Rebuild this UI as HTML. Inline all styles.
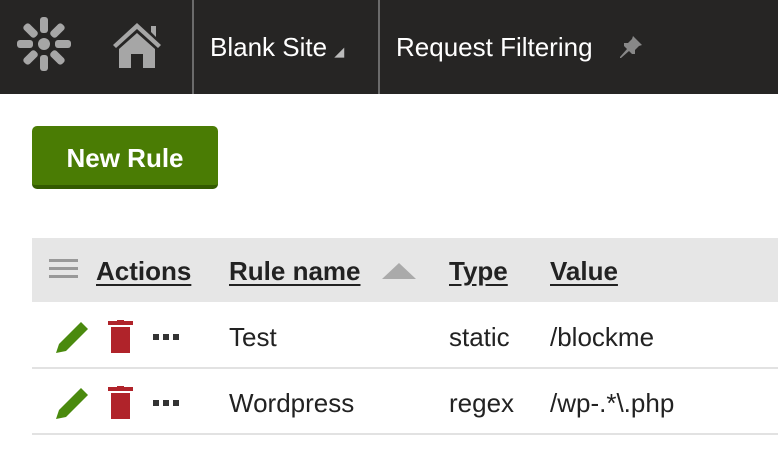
<!DOCTYPE html>
<html><head><style>
body{margin:0;width:778px;height:475px;background:#fff;font-family:"Liberation Sans",sans-serif;overflow:hidden;position:relative}
.hdr{position:absolute;left:0;top:0;width:778px;height:94px;background:#262524}
.sep{position:absolute;top:0;width:2px;height:94px;background:#6b6b6b}
.ht{position:absolute;top:32px;color:#fff;font-size:26px}
.btn{position:absolute;left:32px;top:126px;width:186px;height:59px;background:#4a7c04;border-bottom:4px solid #335a00;border-radius:5px;color:#fff;font-weight:bold;font-size:26px;text-align:center;line-height:64px}
.th{position:absolute;left:32px;top:238px;width:746px;height:64px;background:#e6e6e6}
.c{position:absolute;font-size:26px;color:#222}
.h{font-weight:bold;text-decoration:underline;text-underline-offset:4px;top:256px}
.line{position:absolute;left:32px;width:746px;height:2px;background:#e2e2e2}
</style></head><body>
<div class="hdr">
<svg style="position:absolute;left:15px;top:15px" width="58" height="58" viewBox="-29 -29 58 58">
<g fill="#a6a6a6">
<circle r="6"/>
<g id="p"><rect x="-4" y="-27" width="8" height="16" rx="3"/></g>
<use href="#p" transform="rotate(45)"/><use href="#p" transform="rotate(90)"/><use href="#p" transform="rotate(135)"/><use href="#p" transform="rotate(180)"/><use href="#p" transform="rotate(225)"/><use href="#p" transform="rotate(270)"/><use href="#p" transform="rotate(315)"/>
</g></svg>
<svg style="position:absolute;left:111px;top:21px" width="52" height="48" viewBox="0 0 52 48">
<path fill="#a6a6a6" d="M2 24 L26 2 L50 24 L47 27 L26 8 L5 27Z M40 5 H45 V16 L40 11Z M8 28 L26 12 L44 28 V47 H32 V33 H20 V47 H8Z"/></svg>
<div class="sep" style="left:192px"></div>
<div class="sep" style="left:378px"></div>
<div class="ht" style="left:210px">Blank Site <span style="font-size:13px;color:#bbb">&#9698;</span></div>
<div class="ht" style="left:396px">Request Filtering</div>
<svg style="position:absolute;left:618px;top:34px" width="26" height="26" viewBox="0 0 26 26"><path fill="#888" d="M15 2 L24 11 L21 12 L17 16 L17 20 L14 20 L6 12 L6 9 L10 9 L14 5Z M9 15 L11 17 L3 24 L2 24 L2 23Z"/></svg>
</div>
<div class="btn">New Rule</div>
<div class="th"></div>
<svg style="position:absolute;left:49px;top:258px" width="30" height="22"><g fill="#999"><rect y="1" width="29" height="3"/><rect y="9" width="29" height="3"/><rect y="17" width="29" height="3"/></g></svg>
<div class="c h" style="left:96px">Actions</div>
<div class="c h" style="left:229px">Rule name</div>
<svg style="position:absolute;left:382px;top:262px" width="34" height="18"><path fill="#aaa" d="M0 17 L17 1 L34 17Z"/></svg>
<div class="c h" style="left:449px">Type</div>
<div class="c h" style="left:550px">Value</div>
<div class="line" style="top:367px"></div>
<div class="line" style="top:433px"></div>
<svg style="position:absolute;left:55px;top:320px" width="130" height="34"><path fill="#4a8a0e" d="M1 33 L4 24 L26 2 L33 9 L11 31Z"/><rect x="53" y="1" width="25" height="4" fill="#b0232a"/><rect x="62" y="-1" width="7" height="3" fill="#b0232a"/><rect x="56" y="7" width="19" height="26" fill="#b0232a"/><g fill="#333"><rect x="98" y="14" width="6" height="6"/><rect x="108" y="14" width="6" height="6"/><rect x="118" y="14" width="6" height="6"/></g></svg>
<svg style="position:absolute;left:55px;top:386px" width="130" height="34"><path fill="#4a8a0e" d="M1 33 L4 24 L26 2 L33 9 L11 31Z"/><rect x="53" y="1" width="25" height="4" fill="#b0232a"/><rect x="62" y="-1" width="7" height="3" fill="#b0232a"/><rect x="56" y="7" width="19" height="26" fill="#b0232a"/><g fill="#333"><rect x="98" y="14" width="6" height="6"/><rect x="108" y="14" width="6" height="6"/><rect x="118" y="14" width="6" height="6"/></g></svg>
<div class="c" style="left:229px;top:322px">Test</div>
<div class="c" style="left:449px;top:322px">static</div>
<div class="c" style="left:550px;top:322px">/blockme</div>
<div class="c" style="left:229px;top:388px">Wordpress</div>
<div class="c" style="left:449px;top:388px">regex</div>
<div class="c" style="left:550px;top:388px">/wp-.*\.php</div>
</body></html>
